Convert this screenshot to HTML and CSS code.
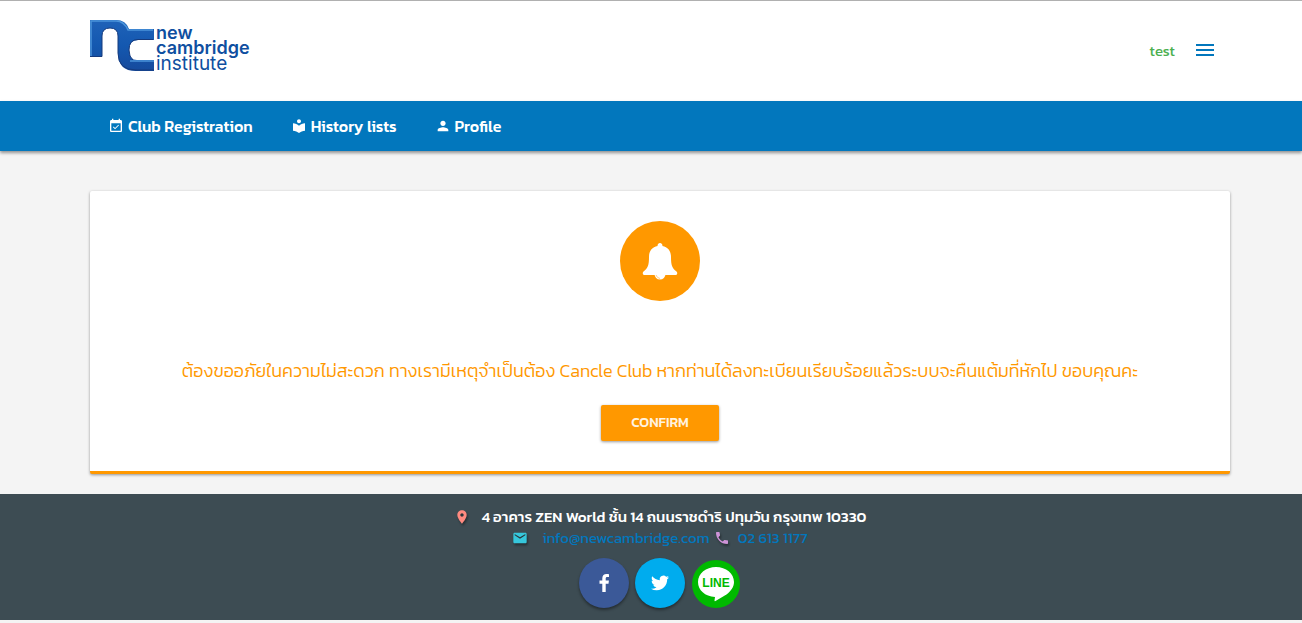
FILE: index.html
```
<!DOCTYPE html>
<html lang="th">
<head>
  <meta charset="UTF-8">
  <meta name="viewport" content="width=device-width, initial-scale=1">
  <title>New Cambridge Institute</title>
  <link rel="stylesheet" href="styles.css">
</head>
<body>

  <header class="header">
    <div class="container header-inner">
      <a href="#" class="logo" aria-label="new cambridge institute">
        <svg width="164" height="56" viewBox="0 0 164 56">
          <defs>
            <linearGradient id="blue" x1="0" y1="0" x2="0" y2="1">
              <stop offset="0" stop-color="#1f62b8"/>
              <stop offset="0.5" stop-color="#1458b0"/>
              <stop offset="1" stop-color="#164a9c"/>
            </linearGradient>
          </defs>
          <path d="M0 1H26Q36 1 39 10H64V21H48Q39 21 39 31Q39 41 47 41H64V52H46Q28 52 28 34V17Q28 9 20 9Q12 9 12 17V38H0Z" fill="url(#blue)"/>
          <path d="M1 38V2H26Q34 2 38 11H63M40 42H64" fill="none" stroke="#4b94da" stroke-width="1.5"/>
          <path d="M0 37.500H12V17Q12 9 20 9Q28 9 28 17V34Q28 51 46 51H64M63 20.500H48Q39 20.500 39 31Q39 38 43 41" fill="none" stroke="#153a7d" stroke-width="1"/>
          <text x="66" y="20" class="logo-bold">new</text>
          <text x="66" y="35" class="logo-bold">cambridge</text>
          <text x="66" y="51" class="logo-light">institute</text>
        </svg>
      </a>
      <div class="user">
        <a href="#" class="user-name">test</a>
        <button class="menu-btn" aria-label="Menu">
          <svg width="24" height="24" viewBox="0 0 24 24"><path d="M3 18h18v-2H3v2zm0-5h18v-2H3v2zm0-7v2h18V6H3z"/></svg>
        </button>
      </div>
    </div>
  </header>

  <nav class="navbar">
    <div class="container nav-inner">
      <a href="#">
        <svg class="icon" viewBox="0 0 24 24"><path d="M16.53 11.06L15.47 10l-4.88 4.88-2.12-2.12-1.06 1.06L10.59 17l5.94-5.94zM19 3h-1V1h-2v2H8V1H6v2H5c-1.11 0-1.99.9-1.99 2L3 19c0 1.1.89 2 2 2h14c1.1 0 2-.9 2-2V5c0-1.1-.9-2-2-2zm0 16H5V8h14v11z"/></svg>
        Club Registration
      </a>
      <a href="#">
        <svg class="icon" viewBox="0 0 24 24"><path d="M12 11.55C9.64 9.35 6.48 8 3 8v11c3.48 0 6.64 1.35 9 3.55 2.36-2.19 5.52-3.55 9-3.55V8c-3.48 0-6.64 1.35-9 3.55zM12 8c1.66 0 3-1.34 3-3s-1.34-3-3-3-3 1.34-3 3 1.34 3 3 3z"/></svg>
        History lists
      </a>
      <a href="#">
        <svg class="icon" viewBox="0 0 24 24"><path d="M12 12c2.21 0 4-1.79 4-4s-1.79-4-4-4-4 1.79-4 4 1.79 4 4 4zm0 2c-2.67 0-8 1.34-8 4v2h16v-2c0-2.66-5.33-4-8-4z"/></svg>
        Profile
      </a>
    </div>
  </nav>

  <main class="container">
    <div class="card">
      <div class="bell">
        <svg width="36" height="38" viewBox="0 0 36 38">
          <path d="M18 0a2.500 2.500 0 0 1 2.400 3C26 4 29 8 29 14c0 8 1 11 5.500 14.500C36 30 35 32 33.500 32H2.500C1 32 0 30 1.500 28.500 6 25 7 22 7 14 7 8 10 4 15.600 3A2.500 2.500 0 0 1 18 0Z"/>
          <path d="M12.500 31h11a5.500 5.500 0 0 1-11 0Z"/>
          <path class="bell-mark" d="M14 32q1 3 4 3.500"/>
        </svg>
      </div>
      <p class="message">ต้องขออภัยในความไม่สะดวก ทางเรามีเหตุจำเป็นต้อง Cancle Club หากท่านได้ลงทะเบียนเรียบร้อยแล้วระบบจะคืนแต้มที่หักไป ขอบคุณคะ</p>
      <button class="confirm-btn">CONFIRM</button>
    </div>
  </main>

  <footer class="footer">
    <div class="container">
      <div class="address">
        <svg class="icon pin" viewBox="0 0 24 24"><path d="M12 2C8.130 2 5 5.130 5 9c0 5.250 7 13 7 13s7-7.750 7-13c0-3.870-3.130-7-7-7zm0 9.500c-1.380 0-2.500-1.120-2.500-2.500s1.120-2.500 2.500-2.500 2.500 1.120 2.500 2.500-1.120 2.500-2.500 2.500z"/></svg>
        <span>4 อาคาร ZEN World ชั้น 14 ถนนราชดำริ ปทุมวัน กรุงเทพ 10330</span>
      </div>
      <div class="contact">
        <svg class="icon mail" viewBox="0 0 24 24"><path d="M20 4H4c-1.100 0-1.990.9-1.990 2L2 18c0 1.100.9 2 2 2h16c1.100 0 2-.9 2-2V6c0-1.100-.9-2-2-2zm0 4l-8 5-8-5V6l8 5 8-5v2z"/></svg>
        <a href="mailto:info@newcambridge.com">info@newcambridge.com</a>
        <svg class="icon phone" viewBox="0 0 24 24"><path d="M6.620 10.790c1.440 2.830 3.760 5.140 6.590 6.590l2.200-2.200c.27-.27.67-.36 1.020-.24 1.120.37 2.330.57 3.570.57.55 0 1 .45 1 1V20c0 .55-.45 1-1 1-9.390 0-17-7.610-17-17 0-.55.45-1 1-1h3.500c.55 0 1 .45 1 1 0 1.250.2 2.450.57 3.570.11.35.03.74-.25 1.020l-2.200 2.200z"/></svg>
        <a href="tel:026131177">02 613 1177</a>
      </div>
      <div class="social">
        <a href="#" class="facebook" aria-label="Facebook">
          <svg width="10" height="18" viewBox="0 0 10 18"><path d="M10 0.200V3H8.300C7 3 6.700 3.700 6.700 4.600V6.600H9.900L9.500 9.800H6.700V18H3.300V9.800H0.500V6.600H3.300V4.200C3.300 1.500 5 0 7.500 0 8.700 0 9.700 0.100 10 0.200Z"/></svg>
        </a>
        <a href="#" class="twitter" aria-label="Twitter">
          <svg width="18" height="18" viewBox="0 0 24 24"><path d="M23.953 4.570a10 10 0 01-2.825.775 4.958 4.958 0 002.163-2.723c-.951.555-2.005.959-3.127 1.184a4.920 4.920 0 00-8.384 4.482C7.690 8.095 4.067 6.130 1.640 3.162a4.822 4.822 0 00-.666 2.475c0 1.710.87 3.213 2.188 4.096a4.904 4.904 0 01-2.228-.616v.06a4.923 4.923 0 003.946 4.827 4.996 4.996 0 01-2.212.085 4.936 4.936 0 004.604 3.417 9.867 9.867 0 01-6.102 2.105c-.39 0-.779-.023-1.170-.067a13.995 13.995 0 007.557 2.209c9.053 0 13.998-7.496 13.998-13.985 0-.21 0-.42-.015-.63A9.935 9.935 0 0024 4.590z"/></svg>
        </a>
        <a href="#" class="line" aria-label="LINE">
          <svg width="50" height="50" viewBox="0 0 50 50">
            <circle cx="25" cy="26" r="24" fill="#00b900"/>
            <path d="M25 9C35 9 43 15.500 43 24 43 29 40 33 35.500 36.500L24.500 43Q23.500 43.500 23.500 42.500L24 39C14 38.500 7 32 7 24 7 15.500 15 9 25 9Z" fill="#fff"/>
            <text x="25" y="29" class="line-text">LINE</text>
          </svg>
        </a>
      </div>
    </div>
  </footer>

</body>
</html>
```
FILE: styles.css
```
* {
  box-sizing: border-box;
}

body {
  background-color: #f4f4f4;
  font-family: Kanit, Prompt, "Noto Sans Thai", "Noto Sans", sans-serif;
  font-size: 15px;
  margin: 0;
}

a {
  color: #0277bd;
  text-decoration: none;
}

svg {
  display: block;
}

.container {
  margin: 0 72px 0 90px;
}

.header {
  background-color: #fff;
  border-top: 1px solid #b0b0b0;
}

.header-inner {
  display: flex;
  justify-content: space-between;
  align-items: center;
  height: 100px;
  padding-bottom: 2px;
}

.logo {
  margin-bottom: 6px;
}

.logo text {
  fill: #0f4fa0;
  font-family: Inter, "Liberation Sans", Arial, sans-serif;
  font-size: 18px;
}

.logo .logo-bold {
  font-weight: 600;
}

.logo .logo-light {
  font-size: 19px;
  font-weight: 400;
}

.user {
  display: flex;
  align-items: center;
  gap: 18px;
  padding-right: 13px;
}

.user-name {
  color: #4caf50;
  font-weight: 400;
}

.menu-btn {
  padding: 0;
  border: none;
  background: none;
  cursor: pointer;
}

.menu-btn svg {
  fill: #0277bd;
}

.navbar {
  background-color: #0277bd;
  box-shadow: 0 2px 3px rgba(0, 0, 0, 0.4);
}

.nav-inner {
  display: flex;
  gap: 38px;
  height: 50px;
  padding-left: 18px;
}

.nav-inner a {
  display: flex;
  align-items: center;
  gap: 4px;
  color: #fff;
  font-size: 16px;
  font-weight: 500;
}

.icon {
  width: 16px;
  height: 16px;
  fill: currentColor;
}

.card {
  display: flex;
  flex-direction: column;
  align-items: center;
  margin-top: 40px;
  padding: 30px 20px;
  background-color: #fff;
  border-bottom: 3px solid #ff9800;
  border-radius: 2px;
  box-shadow: 0 1px 3px rgba(0, 0, 0, 0.4);
}

.bell {
  display: flex;
  align-items: center;
  justify-content: center;
  width: 80px;
  height: 80px;
  padding-top: 2px;
  border-radius: 50%;
  background-color: #ff9800;
}

.bell svg {
  fill: #fff;
}

.bell .bell-mark {
  fill: none;
  stroke: #ffd08a;
}

.message {
  margin: 56px 0 20px;
  color: #ff9800;
  font-size: 18px;
  font-weight: 300;
  line-height: 28px;
}

.confirm-btn {
  height: 36px;
  padding: 0 30px 2px;
  border: none;
  border-radius: 2px;
  background-color: #ff9800;
  box-shadow: 0 1px 3px rgba(0, 0, 0, 0.4);
  color: #fff3e0;
  font-family: inherit;
  font-size: 14px;
  font-weight: 500;
  cursor: pointer;
}

.footer {
  margin-top: 20px;
  padding: 12px 0;
  background-color: #3d4c53;
}

.address, .contact {
  display: flex;
  align-items: center;
  justify-content: center;
  height: 21px;
}

.address {
  gap: 12px;
  color: #fff;
  font-weight: 500;
}

.contact {
  font-weight: 400;
}

.footer .icon {
  filter: drop-shadow(1px 2px 1px rgba(0, 0, 0, 0.4));
}

.pin {
  color: #ff8a80;
}

.mail {
  margin-right: 14px;
  color: #36c7dc;
}

.phone {
  margin: 0 8px 0 4px;
  color: #ce93d8;
}

.social {
  display: flex;
  justify-content: center;
  gap: 6px;
  margin-top: 10px;
}

.social a {
  display: flex;
  align-items: center;
  justify-content: center;
  width: 50px;
  height: 50px;
  border-radius: 50%;
  fill: #fff;
}

.social .facebook {
  background-color: #3b5998;
  box-shadow: 0 2px 3px rgba(0, 0, 0, 0.4);
}

.social .twitter {
  background-color: #00acee;
  box-shadow: 0 2px 3px rgba(0, 0, 0, 0.4);
}

.line-text {
  fill: #00b900;
  font-family: "Liberation Sans", Arial, sans-serif;
  font-size: 12px;
  font-weight: bold;
  text-anchor: middle;
}
```
